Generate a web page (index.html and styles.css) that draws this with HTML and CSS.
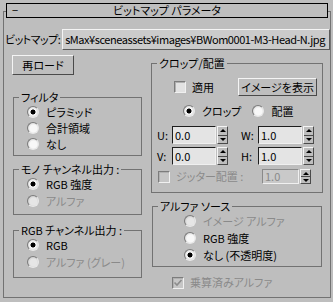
FILE: index.html
```html
<!DOCTYPE html>
<html lang="ja">
<head>
  <meta charset="UTF-8" />
  <title>ビットマップ パラメータ</title>
  <link rel="stylesheet" href="styles.css">
</head>
<body>
  <div class="rollout">
    <div class="titlebar">
      <span class="collapse">−</span>
      <span class="title">ビットマップ パラメータ</span>
      <span></span>
    </div>

    <div class="path-row">
      <span class="path-label">ビットマップ:</span>
      <div class="path-field"><span class="path-text">sMax¥sceneassets¥images¥BWom0001-M3-Head-N.jpg</span></div>
    </div>

    <div class="columns">
      <div class="col-left">
        <div class="btn reload">再ロード</div>

        <div class="group filter">
          <div class="legend">フィルタ</div>
          <div class="opt"><span class="radio on"></span>ピラミッド</div>
          <div class="opt"><span class="radio"></span>合計領域</div>
          <div class="opt"><span class="radio"></span>なし</div>
        </div>

        <div class="group mono">
          <div class="legend">モノ チャンネル出力 :</div>
          <div class="opt"><span class="radio on"></span>RGB 強度</div>
          <div class="opt off"><span class="radio"></span>アルファ</div>
        </div>

        <div class="group rgb">
          <div class="legend">RGB チャンネル出力 :</div>
          <div class="opt"><span class="radio on"></span>RGB</div>
          <div class="opt off"><span class="radio"></span>アルファ (グレー)</div>
        </div>
      </div>

      <div class="col-right">
        <div class="group crop">
          <div class="legend">クロップ/配置</div>
          <div class="apply-row">
            <span class="check"></span><span class="check-text">適用</span>
            <div class="btn show">イメージを表示</div>
          </div>
          <div class="mode-row">
            <div class="opt"><span class="radio on"></span>クロップ</div>
            <div class="opt"><span class="radio"></span>配置</div>
          </div>
          <div class="spin-row">
            <span class="axis">U:</span>
            <div class="spinner"><div class="field">0.0</div><div class="arrows"><i class="up"></i><i class="down"></i></div></div>
            <span class="axis axis-r">W:</span>
            <div class="spinner"><div class="field">1.0</div><div class="arrows"><i class="up"></i><i class="down"></i></div></div>
          </div>
          <div class="spin-row">
            <span class="axis">V:</span>
            <div class="spinner"><div class="field">0.0</div><div class="arrows"><i class="up"></i><i class="down"></i></div></div>
            <span class="axis axis-r">H:</span>
            <div class="spinner"><div class="field">1.0</div><div class="arrows"><i class="up"></i><i class="down"></i></div></div>
          </div>
          <div class="jitter-row off">
            <span class="check"></span><span class="check-text">ジッター配置 :</span>
            <div class="spinner small"><div class="field">1.0</div><div class="arrows"><i class="up"></i><i class="down"></i></div></div>
          </div>
        </div>

        <div class="group alpha">
          <div class="legend">アルファ ソース</div>
          <div class="opt off"><span class="radio"></span>イメージ アルファ</div>
          <div class="opt"><span class="radio"></span>RGB 強度</div>
          <div class="opt"><span class="radio on"></span>なし (不透明度)</div>
        </div>

        <div class="premult off">
          <span class="check">
            <svg width="10" height="10" viewBox="0 0 10 10"><path d="M1.5 4.5 L4 7 L8.5 2" fill="none" stroke="#8c8c8c" stroke-width="1.6"/></svg>
          </span><span class="check-text">乗算済みアルファ</span>
        </div>
      </div>
    </div>
  </div>
</body>
</html>
```

FILE: styles.css
```css
body {
  margin: 0;
  background: #bebebe;
  font-family: "Noto Sans CJK JP", sans-serif;
  font-size: 11px;
  font-feature-settings: "palt";
  color: #000;
  line-height: 13px;
  white-space: nowrap;
}

.rollout {
  margin: 11px 2px 0 3px;
  height: 287px;
  box-sizing: border-box;
  border: 1px solid #727272;
}

.titlebar {
  margin: -9px 2px 0 2px;
  height: 15px;
  box-sizing: border-box;
  border: 1px solid #000;
  background: #bebebe;
  display: grid;
  grid-template-columns: 20px 1fr 20px;
  align-items: center;
}

.collapse {
  padding-left: 5px;
}

.title {
  text-align: center;
}

.path-row {
  display: flex;
  align-items: center;
  margin-top: 11px;
  padding-left: 1px;
}

.path-label {
  flex: none;
  margin-right: 2px;
  letter-spacing: -0.5px;
}

.path-field {
  flex: 1;
  min-width: 0;
  height: 21px;
  box-sizing: border-box;
  display: flex;
  justify-content: flex-end;
  align-items: center;
  overflow: hidden;
  padding-right: 4px;
  background: #cbcbcb;
  border: 1px solid;
  border-color: #f4f4f4 #5a5a5a #5a5a5a #f4f4f4;
}

.path-text {
  letter-spacing: -0.45px;
}

.columns {
  display: flex;
  padding-left: 8px;
}

.col-left {
  width: 130px;
}

.col-right {
  margin-left: 9px;
  width: 172px;
}

.btn {
  box-sizing: border-box;
  display: flex;
  align-items: center;
  justify-content: center;
  background: #bebebe;
  border: 1px solid;
  border-color: #f4f4f4 #4a4a4a #4a4a4a #f4f4f4;
}

.reload {
  margin-top: 5px;
  width: 62px;
  height: 20px;
}

.group {
  border: 1px solid #727272;
  margin-left: 1px;
}

.legend {
  display: table;
  margin: -7px 0 0 5px;
  padding: 0 2px;
  background: #bebebe;
}

.opt {
  display: flex;
  align-items: center;
  height: 16px;
  padding-left: 13px;
}

.off {
  color: #8a8a8a;
}

.radio {
  width: 12px;
  height: 12px;
  box-sizing: border-box;
  border-radius: 50%;
  margin-right: 7px;
  border: 1px solid;
  border-color: #7c7c7c #e8e8e8 #e8e8e8 #7c7c7c;
  background: radial-gradient(circle at 55% 55%, #f8f8f8 0 45%, #d8d8d8 75%);
}

.radio.on {
  background: radial-gradient(circle, #000 0 2.2px, #f8f8f8 2.8px 45%, #d8d8d8 75%);
}

.off .radio {
  background: radial-gradient(circle at 55% 55%, #e6e6e6 0 45%, #cacaca 75%);
}

.filter {
  margin-top: 22px;
  padding-bottom: 3px;
}

.mono {
  margin-top: 13px;
  padding-bottom: 5px;
}

.mono .opt:first-of-type {
  margin-top: 2px;
}

.mono .opt + .opt {
  margin-top: 1px;
}

.rgb {
  margin-top: 15px;
  padding-bottom: 7px;
}

.rgb .opt:first-of-type {
  margin-top: 4px;
}

.rgb .opt + .opt {
  margin-top: 1px;
}

.crop {
  margin: 13px 0 0 0;
  padding-bottom: 8px;
}

.check {
  width: 12px;
  height: 12px;
  box-sizing: border-box;
  display: flex;
  align-items: center;
  justify-content: center;
  border: 1px solid;
  border-color: #7c7c7c #f0f0f0 #f0f0f0 #7c7c7c;
  background: #e2e2e2;
  box-shadow: inset 1px 1px 0 #b0b0b0;
}

.off .check {
  background: #c6c6c6;
}

.check-text {
  margin-left: 6px;
}

.apply-row {
  display: flex;
  align-items: center;
  margin-top: 8px;
  height: 18px;
  padding-left: 22px;
}

.show {
  margin-left: auto;
  margin-right: 5px;
  width: 79px;
  height: 18px;
}

.mode-row {
  display: flex;
  margin-top: 7px;
  padding-left: 31px;
}

.mode-row .opt {
  padding-left: 0;
}

.mode-row .opt + .opt {
  margin-left: 11px;
}

.spin-row {
  display: flex;
  align-items: center;
  margin-top: 7px;
  padding-left: 5px;
}

.spin-row + .spin-row {
  margin-top: 3px;
}

.axis {
  width: 15px;
}

.axis-r {
  margin-left: 13px;
  width: 17px;
}

.spinner {
  display: flex;
  gap: 1px;
  height: 18px;
}

.field {
  width: 44px;
  box-sizing: border-box;
  padding-left: 2px;
  display: flex;
  align-items: center;
  background: #e4e4e4;
  border: 1px solid;
  border-color: #1e1e1e #f0f0f0 #f0f0f0 #1e1e1e;
}

.arrows {
  width: 11px;
  display: flex;
  flex-direction: column;
  box-sizing: border-box;
  border: 1px solid;
  border-color: #f4f4f4 #4a4a4a #4a4a4a #f4f4f4;
}

.arrows i {
  flex: 1;
  display: flex;
  align-items: center;
  justify-content: center;
}

.arrows i::before {
  content: "";
  border-left: 3px solid transparent;
  border-right: 3px solid transparent;
}

.arrows .up::before {
  border-bottom: 3px solid #000;
}

.arrows .down {
  border-top: 1px solid #4a4a4a;
}

.arrows .down::before {
  border-top: 3px solid #000;
}

.jitter-row {
  display: flex;
  align-items: center;
  margin-top: 4px;
  padding-left: 6px;
}

.spinner.small {
  margin-left: auto;
  margin-right: 11px;
  height: 15px;
}

.spinner.small .field {
  width: 37px;
  background: #c9c9c9;
  border-color: #8a8a8a #f0f0f0 #f0f0f0 #8a8a8a;
}

.alpha {
  margin-top: 13px;
  width: 168px;
  padding-bottom: 3px;
}

.alpha .opt {
  padding-left: 31px;
}

.alpha .opt + .opt {
  margin-top: 1px;
}

.premult {
  display: flex;
  align-items: center;
  margin-top: 9px;
  padding-left: 21px;
}
```
